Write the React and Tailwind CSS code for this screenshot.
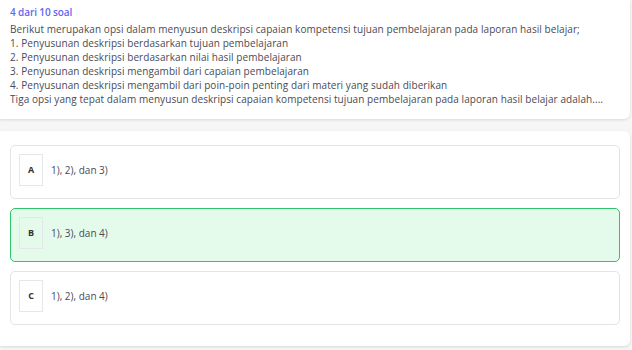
export default function App() {
  const options = [
    { l: "A", t: "1), 2), dan 3)", sel: false },
    { l: "B", t: "1), 3), dan 4)", sel: true },
    { l: "C", t: "1), 2), dan 4)", sel: false },
  ];
  return (
    <div className="w-[632px] h-[350px] bg-[#f6f6f7] overflow-hidden font-['Open_Sans','Liberation_Sans',sans-serif]">
      <div className="w-[630px] h-[119px] bg-white rounded-br-[6px] shadow-[0_1px_3px_rgba(0,0,0,0.12)] px-[10px] pt-[5px]">
        <div className="text-[10px] font-semibold leading-[14px] text-[#5f68f0] tracking-[-0.1px]">4 dari 10 soal</div>
        <div className="mt-[3px] text-[10px] leading-[14px] text-[#4a4a55] tracking-[0.07px]">
          <div>Berikut merupakan opsi dalam menyusun deskripsi capaian kompetensi tujuan pembelajaran pada laporan hasil belajar;</div>
          <div>1. Penyusunan deskripsi berdasarkan tujuan pembelajaran</div>
          <div>2. Penyusunan deskripsi berdasarkan nilai hasil pembelajaran</div>
          <div>3. Penyusunan deskripsi mengambil dari capaian pembelajaran</div>
          <div>4. Penyusunan deskripsi mengambil dari poin-poin penting dari materi yang sudah diberikan</div>
          <div>Tiga opsi yang tepat dalam menyusun deskripsi capaian kompetensi tujuan pembelajaran pada laporan hasil belajar adalah....</div>
        </div>
      </div>
      <div className="mt-[12px] w-[630px] h-[215px] bg-white rounded-r-[6px] shadow-[0_1px_3px_rgba(0,0,0,0.12)] pl-[10px] pr-[10px] pt-[14px] flex flex-col gap-[9px]">
        {options.map((o) => (
          <div
            key={o.l}
            className={
              o.sel
                ? "h-[54px] rounded-[5px] border border-[#2fc46a] bg-[#e4fbeb] flex items-start pt-[8px] pl-[8px]"
                : "h-[54px] rounded-[5px] border border-[#e4e4e7] bg-white flex items-start pt-[8px] pl-[8px]"
            }
          >
            <div className="w-[24px] h-[32px] border border-[#e5e7eb] flex items-center justify-center text-[9px] font-bold text-[#333]">
              {o.l}
            </div>
            <div className="ml-[8px] h-[32px] flex items-center text-[10px] text-[#4a4a55]">
              {o.t}
            </div>
          </div>
        ))}
      </div>
    </div>
  );
}
